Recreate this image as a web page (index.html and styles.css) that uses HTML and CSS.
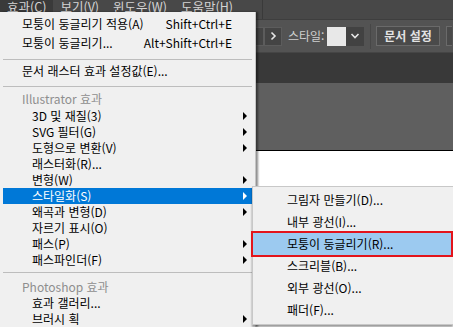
FILE: index.html
```html
<!DOCTYPE html>
<html lang="ko">
<head>
  <meta charset="utf-8">
  <title>효과 메뉴</title>
  <link rel="stylesheet" href="styles.css">
</head>
<body>
  <div class="app">
    <div class="menubar">
      <span class="mb-item active">효과(C)</span>
      <span class="mb-item">보기(V)</span>
      <span class="mb-item">윈도우(W)</span>
      <span class="mb-item">도움말(H)</span>
      <span class="mb-divider"></span>
    </div>
    <div class="toolbar">
      <span class="tb-btn wide"></span>
      <span class="tb-btn">
        <svg width="8" height="10" viewBox="0 0 8 10"><path d="M2.5 1.5 L6 5 L2.5 8.5" fill="none" stroke="#e6e6e6" stroke-width="1.6"/></svg>
      </span>
      <span class="tb-label">스타일:</span>
      <span class="swatch"></span>
      <span class="tb-drop">
        <svg width="10" height="8" viewBox="0 0 10 8"><path d="M1.5 2 L5 5.5 L8.5 2" fill="none" stroke="#e6e6e6" stroke-width="1.6"/></svg>
      </span>
      <span class="tb-divider"></span>
      <span class="tb-button">문서 설정</span>
      <span class="tb-button cut"></span>
    </div>
    <div class="tabbar"></div>
    <div class="canvas"></div>
    <div class="artboard"></div>
  </div>

  <div class="menu menu-main">
    <div class="mi top"><span>모퉁이 둥글리기 적용(A)</span><span class="shortcut">Shift+Ctrl+E</span></div>
    <div class="mi top second"><span>모퉁이 둥글리기...</span><span class="shortcut">Alt+Shift+Ctrl+E</span></div>
    <div class="sep sep-a"></div>
    <div class="mi top"><span>문서 래스터 효과 설정값(E)...</span></div>
    <div class="sep sep-b"></div>
    <div class="mi header">Illustrator 효과</div>
    <div class="mi"><span>3D 및 재질(3)</span><span class="arrow"></span></div>
    <div class="mi"><span>SVG 필터(G)</span><span class="arrow"></span></div>
    <div class="mi"><span>도형으로 변환(V)</span><span class="arrow"></span></div>
    <div class="mi"><span>래스터화(R)...</span></div>
    <div class="mi"><span>변형(W)</span><span class="arrow"></span></div>
    <div class="mi selected"><span>스타일화(S)</span><span class="arrow"></span></div>
    <div class="mi"><span>왜곡과 변형(D)</span><span class="arrow"></span></div>
    <div class="mi"><span>자르기 표시(O)</span></div>
    <div class="mi"><span>패스(P)</span><span class="arrow"></span></div>
    <div class="mi"><span>패스파인더(F)</span><span class="arrow"></span></div>
    <div class="sep sep-c"></div>
    <div class="mi header ps">Photoshop 효과</div>
    <div class="mi"><span>효과 갤러리...</span></div>
    <div class="mi"><span>브러시 획</span><span class="arrow"></span></div>
  </div>

  <div class="menu menu-sub">
    <div class="si">그림자 만들기(D)...</div>
    <div class="si">내부 광선(I)...</div>
    <div class="si hover">모퉁이 둥글리기(R)...</div>
    <div class="si">스크리블(B)...</div>
    <div class="si">외부 광선(O)...</div>
    <div class="si">패더(F)...</div>
  </div>
</body>
</html>
```

FILE: styles.css
```css
body{
  margin: 0;
  width: 453px;
  height: 327px;
  overflow: hidden;
  position: relative;
  font-family: "Noto Sans CJK KR", "Noto Sans", sans-serif;
  font-size: 12px;
  background-color: #FFFFFF;
}

/* app chrome behind the menus */

.app{
  display: flex;
  flex-direction: column;
  height: 327px;
}

.menubar{
  display: flex;
  align-items: flex-start;
  height: 20px;
  background-color: #484848;
  border-bottom: 1px solid #3e3e3e;
  overflow: hidden;
  box-sizing: border-box;
}

.mb-item{
  flex-shrink: 0;
  height: 14px;
  line-height: 18px;
  margin-top: -5px;
  padding: 3px 7px 0 7px;
  color: #d4d4d4;
  font-size: 12.5px;
  overflow: hidden;
  white-space: nowrap;
}

.mb-item.active{
  background-color: #3a3a3a;
}

.mb-divider{
  flex-shrink: 0;
  width: 1px;
  height: 20px;
  margin-left: 22px;
  background-color: #3a3a3a;
}

.toolbar{
  display: flex;
  align-items: center;
  height: 33px;
  padding-left: 244px;
  background-color: #535353;
  border-bottom: 1px solid #454545;
  box-sizing: border-box;
  white-space: nowrap;
  overflow: hidden;
}

.toolbar > *{
  flex-shrink: 0;
}

.tb-btn{
  display: flex;
  align-items: center;
  justify-content: center;
  width: 18px;
  height: 19px;
  background-color: #444444;
  border: 1px solid #5c5c5c;
  box-sizing: border-box;
}

.tb-btn.wide{
  width: 20px;
}

.tb-label{
  width: 33px;
  margin-left: 6px;
  color: #cfcfcf;
  line-height: 14px;
}

.swatch{
  width: 19px;
  height: 19px;
  margin-left: 6px;
  background-color: #e8e8e8;
}

.tb-drop{
  display: flex;
  align-items: center;
  justify-content: center;
  width: 18px;
  height: 19px;
  background-color: #424242;
}

.tb-divider{
  width: 1px;
  height: 25px;
  margin-left: 6px;
  background-color: #474747;
}

.tb-button{
  width: 64px;
  height: 20px;
  margin-left: 5px;
  background-color: #4a4a4a;
  border: 1px solid #6a6a6a;
  box-sizing: border-box;
  color: #e2e2e2;
  font-weight: bold;
  text-align: center;
  line-height: 17px;
}

.tb-button.cut{
  margin-left: 6px;
  width: 6px;
  border-right: 0;
}

.tabbar{
  height: 30px;
  background-color: #393939;
}

.canvas{
  height: 67px;
  background-color: #5f5f5f;
  border-bottom: 1px solid #000000;
}

.artboard{
  flex: 1;
  background-color: #FFFFFF;
}

/* dropdown menus */

.menu{
  position: absolute;
  background-color: #f0f0f0;
  color: #000000;
  box-sizing: border-box;
}

.menu-main{
  left: 0;
  top: 12px;
  width: 256px;
  height: 315px;
  padding-top: 3px;
  border-right: 1px solid #c4c4c4;
  box-shadow: 2px 0 2px rgba(0, 0, 0, 0.45);
}

.mi{
  display: flex;
  align-items: center;
  height: 16px;
  line-height: 16px;
  margin: 0 2px 0 3px;
  padding: 0 6px 0 29px;
  white-space: nowrap;
}

.mi.top{
  height: 18px;
  line-height: 18px;
  padding-left: 19px;
}

.mi.top.second{
  height: 19px;
}

.shortcut{
  margin-left: auto;
  margin-right: 15px;
}

.mi.header{
  height: 18px;
  padding-left: 19px;
  color: #8e8e8e;
}

.mi.header.ps{
  height: 17px;
}

.arrow{
  margin-left: auto;
  width: 0;
  height: 0;
  border-left: 4px solid #000000;
  border-top: 4px solid transparent;
  border-bottom: 4px solid transparent;
}

.mi.selected{
  background-color: #0078d7;
  color: #FFFFFF;
}

.mi.selected .arrow{
  border-left-color: #FFFFFF;
}

.sep{
  height: 1px;
  margin: 0 3px 0 3px;
  background-color: #bdbdbd;
}

.sep-a{
  margin-top: 7px;
  margin-bottom: 2px;
}

.sep-b{
  margin-top: 6px;
  margin-bottom: 3px;
}

.sep-c{
  margin-top: 4px;
  margin-bottom: 5px;
}

.menu-sub{
  left: 252px;
  top: 186px;
  width: 201px;
  padding: 2px 0 3px 0;
  border: 1px solid #c8c8c8;
  border-right: 0;
  box-shadow: 0 2px 2px rgba(0, 0, 0, 0.4);
}

.si{
  height: 22px;
  line-height: 22px;
  padding-left: 34px;
  white-space: nowrap;
}

.si.hover{
  background-color: #9ccaf0;
  outline: 2px solid #e3141b;
  outline-offset: 0;
  margin-right: 2px;
}
```
